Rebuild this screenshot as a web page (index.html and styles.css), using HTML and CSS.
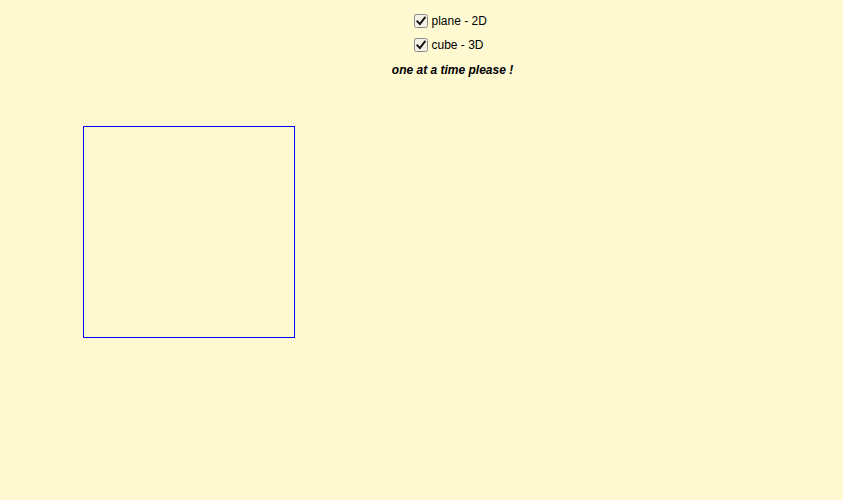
FILE: index.html
```html
<!DOCTYPE html>
<html>
<head>
<meta charset="utf-8">
<link rel="stylesheet" href="styles.css">
</head>
<body>
<div class="controls">
  <label class="row">
    <input class="cb-input" type="checkbox" checked>
    <svg class="cb" width="14" height="14" viewBox="0 0 14 14"><rect x="0.5" y="0.5" width="13" height="13" rx="2" fill="#f4f1e6" stroke="#8a8a8a"/><path d="M3.2 7.2 L5.8 10.2 L11 3.4" fill="none" stroke="#111" stroke-width="1.9" stroke-linecap="round" stroke-linejoin="round"/></svg>
    plane - 2D</label>
  <label class="row">
    <input class="cb-input" type="checkbox" checked>
    <svg class="cb" width="14" height="14" viewBox="0 0 14 14"><rect x="0.5" y="0.5" width="13" height="13" rx="2" fill="#f4f1e6" stroke="#8a8a8a"/><path d="M3.2 7.2 L5.8 10.2 L11 3.4" fill="none" stroke="#111" stroke-width="1.9" stroke-linecap="round" stroke-linejoin="round"/></svg>
    cube - 3D</label>
  <div class="note">one at a time please !</div>
</div>
<div class="stage"></div>
</body>
</html>
```

FILE: styles.css
```css
html, body {
  background: #fff9d2;
}
body {
  margin: 8px;
  font-family: "Liberation Sans", Arial, sans-serif;
  font-size: 12px;
  color: #000;
}
.controls {
  display: flex;
  flex-direction: column;
  align-items: center;
  padding-left: 62px;
  padding-top: 1px;
}
.row {
  display: flex;
  align-items: center;
  height: 24px;
  width: 78px;
}
.cb-input {
  display: none;
}
.cb {
  flex: none;
  margin: 0 4px 0 0;
  display: block;
}
.note {
  margin-top: 6px;
  font-weight: bold;
  font-style: italic;
  font-size: 12px;
}
.stage {
  margin-top: 49px;
  margin-left: 75px;
  width: 210px;
  height: 210px;
  border: 1px solid #0000ff;
}
```
